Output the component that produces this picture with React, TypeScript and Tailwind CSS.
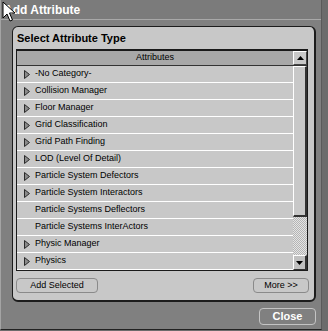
import React from "react";

const rows = [
  { label: "-No Category-", arrow: true },
  { label: "Collision Manager", arrow: true },
  { label: "Floor Manager", arrow: true },
  { label: "Grid Classification", arrow: true },
  { label: "Grid Path Finding", arrow: true },
  { label: "LOD (Level Of Detail)", arrow: true },
  { label: "Particle System Defectors", arrow: true },
  { label: "Particle System Interactors", arrow: true },
  { label: "Particle Systems Deflectors", arrow: false },
  { label: "Particle Systems InterActors", arrow: false },
  { label: "Physic Manager", arrow: true },
  { label: "Physics", arrow: true },
];

const Expander = () => (
  <svg width="6" height="9" viewBox="0 0 6 9" className="shrink-0">
    <polygon points="0.5,0.5 5.5,4.5 0.5,8.5" fill="#8a8a8a" stroke="#2a2a2a" strokeWidth="1" />
  </svg>
);

const Cursor = () => (
  <svg width="14" height="22" viewBox="0 0 14 22" className="absolute left-[2px] top-[1px]">
    <path d="M1 1 L1 17 L5 13 L8 20 L10.5 19 L7.5 12 L13 12 Z" fill="#ffffff" stroke="#000000" strokeWidth="1" strokeLinejoin="miter" />
  </svg>
);

export default function App() {
  return (
    <div
      className="relative w-[328px] h-[331px] bg-[#6c6c6c] overflow-hidden"
      style={{ fontFamily: '"Liberation Sans", Arial, sans-serif' }}
    >
      <div className="w-[322px] h-[330px] bg-[#808080] border-l border-[#a4a4a4] border-r border-r-[#5a5a5a] border-b border-b-[#222] flex flex-col">
        {/* title bar */}
        <div className="h-[20px] bg-[#7b7b7b] border-b border-[#a8a8a8] flex items-center pl-[3px]">
          <span className="text-[12px] font-bold text-white leading-none">Add Attribute</span>
        </div>

        {/* panel */}
        <div className="ml-[11px] mt-[6px] w-[304px] h-[276px] bg-[#c8c8c8] rounded-[6px] border border-[#1c1c1c] border-r-2 border-b-2 flex flex-col">
          <div className="h-[22px] flex items-center pl-[4px]">
            <span className="text-[11px] font-bold text-black">Select Attribute Type</span>
          </div>

          {/* list */}
          <div className="ml-[3px] w-[292px] h-[222px] border-t-2 border-l border-r border-b border-[#1a1a1a] flex flex-col">
            <div className="h-[16px] flex border-b border-[#333]">
              <div className="flex-1 bg-[#a8a8a8] flex items-center justify-center text-[9px] text-black">
                Attributes
              </div>
              <div className="w-[14px] bg-[#c8c8c8] border-l border-t border-white border-r border-b border-r-[#444] border-b-[#444] flex items-center justify-center">
                <svg width="7" height="4" viewBox="0 0 7 4">
                  <polygon points="0,4 3.5,0 7,4" fill="#000" />
                </svg>
              </div>
            </div>
            <div className="flex flex-1">
              <div className="flex-1 flex flex-col">
                {rows.map((r) => (
                  <div
                    key={r.label}
                    className="h-[17px] border-b border-white flex items-center pl-[7px] gap-[5px] text-[9px] text-black"
                  >
                    {r.arrow ? <Expander /> : <span className="w-[6px] shrink-0" />}
                    <span>{r.label}</span>
                  </div>
                ))}
              </div>
              <div className="w-[14px] flex flex-col">
                <div className="h-[151px] bg-[#c8c8c8] border-l border-t border-white border-r-2 border-b-2 border-r-[#333] border-b-[#333]" />
                <div className="h-[38px] bg-[repeating-conic-gradient(#e4e4e4_0_25%,#b4b4b4_0_50%)] bg-[length:2px_2px]" />
                <div className="h-[15px] bg-[#c0c0c0] border-l border-t border-white border-r-2 border-b border-r-[#333] border-b-[#333] flex items-center justify-center">
                  <svg width="7" height="4" viewBox="0 0 7 4">
                    <polygon points="0,0 3.5,4 7,0" fill="#000" />
                  </svg>
                </div>
              </div>
            </div>
          </div>

          {/* buttons */}
          <div className="mt-[7px] ml-[3px] w-[293px] flex justify-between">
            <button className="w-[82px] h-[15px] rounded-[4px] border border-[#8a8a8a] bg-[#c8c8c8] text-[9px] text-black flex items-center justify-center leading-none">
              Add Selected
            </button>
            <button className="w-[56px] h-[15px] rounded-[4px] border border-[#8a8a8a] bg-[#c8c8c8] text-[9px] text-black flex items-center justify-center leading-none">
              More &gt;&gt;
            </button>
          </div>
        </div>

        <div className="mt-[6px] flex justify-end pr-[5px]">
          <button className="w-[57px] h-[17px] rounded-[4px] border border-[#c4c4c4] bg-[#808080] text-[11px] font-bold text-white flex items-center justify-center leading-none">
            Close
          </button>
        </div>
      </div>
      <Cursor />
    </div>
  );
}
